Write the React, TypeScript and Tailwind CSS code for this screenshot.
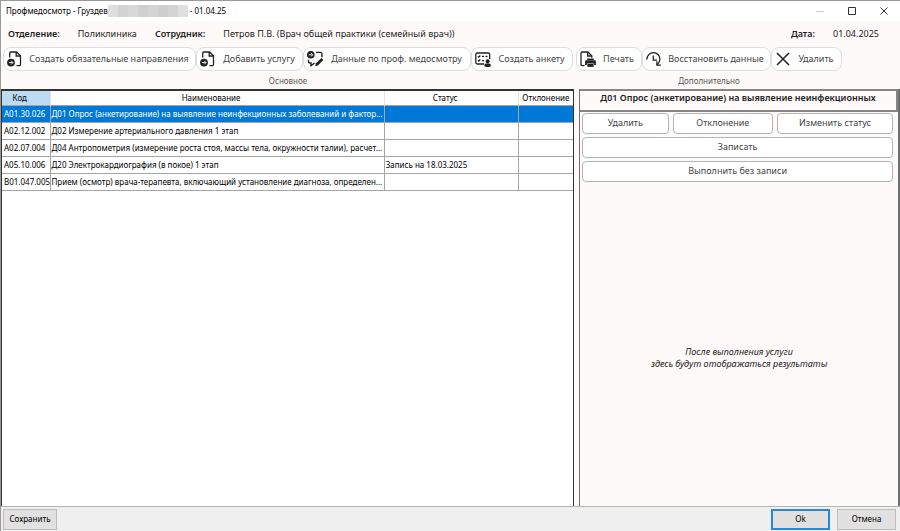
import React from "react";

const services = [
  {
    code: "A01.30.026",
    name: "Д01 Опрос (анкетирование) на выявление неинфекционных заболеваний и фактор...",
    status: "",
  },
  { code: "A02.12.002", name: "Д02 Измерение артериального давления 1 этап", status: "" },
  {
    code: "A02.07.004",
    name: "Д04 Антропометрия (измерение роста стоя, массы тела, окружности талии), расчет...",
    status: "",
  },
  {
    code: "A05.10.006",
    name: "Д20 Электрокардиография (в покое) 1 этап",
    status: "Запись на 18.03.2025",
  },
  {
    code: "B01.047.005",
    name: "Прием (осмотр) врача-терапевта, включающий установление диагноза, определен...",
    status: "",
  },
];

function AddFileIcon() {
  return (
    <svg className="h-4 w-4 shrink-0" viewBox="0 0 16 16" fill="none" stroke="#222" strokeWidth="1.3">
      <path d="M2.700 6.500V2.200C2.700 1.400 3.100 1 3.900 1H9.500l4 3.800v8.700c0 .8-.4 1.200-1.200 1.200H9.500" />
      <path d="M9.200 1v4h4.300" />
      <circle cx="4" cy="11.600" r="3.900" fill="#222" stroke="none" />
      <path d="M2 11.600h3.800M4.300 9.900L6 11.600l-1.700 1.700" stroke="#fff" strokeWidth="0.9" />
    </svg>
  );
}

function ExamDataIcon() {
  return (
    <svg className="h-4 w-4 shrink-0" viewBox="0 0 16 16" fill="none" stroke="#222" strokeWidth="1.4">
      <circle cx="3.800" cy="3.800" r="3.800" fill="#222" stroke="none" />
      <path d="M1.800 3.800h3.800M4.100 2.100l1.700 1.700-1.700 1.700" stroke="#fff" strokeWidth="0.9" />
      <path d="M9 1.400h4.400c1 0 1.500.5 1.500 1.500v3.400" />
      <path d="M1.500 8.800v1.700c0 1 .5 1.500 1.500 1.500h1v2.700L7.500 12" />
      <path d="M8.300 15.300l.6-3 5.600-5.200L16.300 9l-5.400 5.400z" fill="#222" stroke="none" />
    </svg>
  );
}

function SurveyIcon() {
  return (
    <svg className="h-4 w-4 shrink-0" viewBox="0 0 16 16" fill="none" stroke="#222" strokeWidth="1.3">
      <path d="M9 13H2.300C1.300 13 .8 12.500.8 11.500v-8C.8 2.500 1.300 2 2.300 2h10.900c1 0 1.500.5 1.500 1.500V8" />
      <path d="M3 5.200l.8.800 1.500-1.400M7 5.400h2M10.500 5.400h2" />
      <path d="M3 9.200l.8.800 1.500-1.400M7 9.600h2" />
      <circle cx="12.600" cy="10.200" r="2" fill="#222" stroke="none" />
      <path d="M9.300 14.400c0-1.400 1.300-2.200 3.300-2.200s3.300.8 3.300 2.200-1.300 1.500-3.300 1.500-3.300-.1-3.300-1.500z" fill="#222" stroke="none" />
    </svg>
  );
}

function PrintIcon() {
  return (
    <svg className="h-4 w-4 shrink-0" viewBox="0 0 16 16" fill="none" stroke="#222" strokeWidth="1.3">
      <path d="M4.500 14.600H2.200c-.8 0-1.200-.4-1.200-1.200V2.200C1 1.400 1.400 1 2.200 1h5.600l4 3.800v2" />
      <path d="M7.700 1v4h4.100" />
      <path d="M7.200 7.500h6.600v1.600H7.200z" fill="#222" stroke="none" />
      <path d="M6.600 9.300h7.800c.9 0 1.500.5 1.500 1.400v3.400h-1.800v-1.500H6.900v1.500H5.100v-3.400c0-.9.600-1.400 1.500-1.400z" fill="#222" stroke="none" />
      <path d="M7.400 13h6.200v2.900H7.400z" fill="#222" stroke="none" />
    </svg>
  );
}

function RestoreIcon() {
  return (
    <svg className="h-4 w-4 shrink-0" viewBox="0 0 16 16" fill="none" stroke="#222" strokeWidth="1.3">
      <path d="M.9 8.500C.9 4.500 3.700 1.700 7.300 1.700s6.600 2.800 6.600 6.300c0 2.500-1.200 4.500-2.800 6" />
      <path d="M7.300 4.600v4.500h3.600" />
      <path d="M10.900 10.300V14.200h4" />
    </svg>
  );
}

function CrossIcon() {
  return (
    <svg className="h-4 w-4 shrink-0" viewBox="0 0 16 16" fill="none" stroke="#222" strokeWidth="1.5">
      <path d="M2 2l12 12M14 2L2 14" />
    </svg>
  );
}

function ToolButton({ icon, label, className }: { icon: React.ReactNode; label: string; className: string }) {
  return (
    <button
      type="button"
      className={`flex h-6 items-center rounded-lg border border-[#dedede] bg-white pl-[3px] text-[9px] text-[#444] ${className}`}
    >
      {icon}
      <span className="flex-1 whitespace-nowrap text-center">{label}</span>
    </button>
  );
}

function TitleBar() {
  return (
    <header className="flex h-[21px] items-center border-t border-[#999] bg-white pl-[5px] text-[8px] text-black">
      <h1>Профмедосмотр - Груздев</h1>
      <div className="grid h-3 w-20 grid-cols-8">
        <span className="bg-[#dedede]" />
        <span className="bg-[#d3d3d3]" />
        <span className="bg-[#d8d8d8]" />
        <span className="bg-[#d0d0d0]" />
        <span className="bg-[#d5d5d5]" />
        <span className="bg-[#cfcfcf]" />
        <span className="bg-[#d4d4d4]" />
        <span className="bg-[#e0e0e0]" />
      </div>
      <span className="ml-[2px]">- 01.04.25</span>
      <div className="ml-auto flex">
        <button type="button" aria-label="Свернуть" className="flex w-8 justify-center">
          <svg className="h-2 w-2" viewBox="0 0 8 8" stroke="#ccc">
            <path d="M0 4.500h8" />
          </svg>
        </button>
        <button type="button" aria-label="Развернуть" className="flex w-8 justify-center">
          <svg className="h-2 w-2" viewBox="0 0 8 8" fill="none" stroke="#333">
            <path d="M.5.5h7v7h-7z" />
          </svg>
        </button>
        <button type="button" aria-label="Закрыть" className="flex w-8 justify-center">
          <svg className="h-2 w-2" viewBox="0 0 8 8" stroke="#333">
            <path d="M.5.5l7 7M7.500.5l-7 7" />
          </svg>
        </button>
      </div>
    </header>
  );
}

function Toolbar() {
  return (
    <div className="flex gap-[3px] pl-[2px] text-center text-[8px] text-[#555]">
      <div>
        <div className="flex">
          <ToolButton icon={<AddFileIcon />} label="Создать обязательные направления" className="w-[193px]" />
          <ToolButton icon={<AddFileIcon />} label="Добавить услугу" className="w-[107px]" />
          <ToolButton icon={<ExamDataIcon />} label="Данные по проф. медосмотру" className="w-[168px]" />
          <ToolButton icon={<SurveyIcon />} label="Создать анкету" className="w-[102px]" />
        </div>
        <p className="h-[18px] leading-[20px]">Основное</p>
      </div>
      <div>
        <div className="flex">
          <ToolButton icon={<PrintIcon />} label="Печать" className="w-[66px]" />
          <ToolButton icon={<RestoreIcon />} label="Восстановить данные" className="w-[129px]" />
          <ToolButton icon={<CrossIcon />} label="Удалить" className="w-[71px]" />
        </div>
        <p className="h-[18px] leading-[20px]">Дополнительно</p>
      </div>
    </div>
  );
}

function ServicesTable() {
  return (
    <section className="flex-[575] border border-t-2 border-b-0 border-[#333] bg-white">
      <table className="w-full table-fixed border-collapse text-[8px] text-black">
        <colgroup>
          <col className="w-[48px]" />
          <col />
          <col className="w-[134px]" />
          <col className="w-[55px]" />
        </colgroup>
        <thead>
          <tr className="h-[14px] leading-[14px]">
            <th className="border-r border-[#e5e5e5] bg-[#bcdcf4] pr-3 font-normal">Код</th>
            <th className="border-r border-[#e5e5e5] pr-3 font-normal">Наименование</th>
            <th className="border-r border-[#e5e5e5] pr-3 font-normal">Статус</th>
            <th className="font-normal">Отклонение</th>
          </tr>
        </thead>
        <tbody>
          {services.map((service, index) => (
            <tr key={service.code} className={index === 0 ? "h-[17px] bg-[#0078d7] text-white" : "h-[17px]"}>
              <td className="border border-l-0 border-[#a5a5a5] pl-[2px] leading-4 whitespace-nowrap">{service.code}</td>
              <td className="border border-[#a5a5a5] pl-[1px] leading-4 whitespace-nowrap">{service.name}</td>
              <td className="border border-[#a5a5a5] pl-[1px] leading-4">{service.status}</td>
              <td className="border border-r-0 border-[#a5a5a5]"></td>
            </tr>
          ))}
        </tbody>
      </table>
    </section>
  );
}

function ActionButton({ label, className = "" }: { label: string; className?: string }) {
  return (
    <button
      type="button"
      className={`h-[21px] rounded-[4px] border border-[#b5b5b5] bg-white pb-[2px] text-[9px] text-[#444] ${className}`}
    >
      {label}
    </button>
  );
}

function DetailsPanel() {
  return (
    <section className="ml-[5px] flex flex-[320] flex-col border-r-2 border-l border-[#707070]">
      <h2 className="h-[23px] border-2 border-l-0 border-[#858585] text-center text-[9px] leading-[13px] font-semibold text-[#222]">
        Д01 Опрос (анкетирование) на выявление неинфекционных
      </h2>
      <div className="mt-[1px] flex flex-col gap-[3px] pr-[5px] pl-[2px]">
        <div className="flex gap-1">
          <ActionButton label="Удалить" className="flex-[86]" />
          <ActionButton label="Отклонение" className="flex-[100]" />
          <ActionButton label="Изменить статус" className="flex-[116]" />
        </div>
        <ActionButton label="Записать" />
        <ActionButton label="Выполнить без записи" />
      </div>
      <p className="flex flex-1 items-center justify-center pt-7 text-center text-[9px] leading-3 text-[#222] italic">
        После выполнения услуги
        <br />
        здесь будут отображаться результаты
      </p>
    </section>
  );
}

function App() {
  return (
    <div className="flex min-h-screen flex-col border-l border-[#999] bg-[#fffafa] font-['Noto_Sans',sans-serif]">
      <TitleBar />
      <dl className="flex h-[26px] items-center pr-[21px] pl-[7px] text-[9px] text-[#222]">
        <dt className="font-semibold">Отделение:</dt>
        <dd className="ml-[18px]">Поликлиника</dd>
        <dt className="ml-[18px] font-semibold">Сотрудник:</dt>
        <dd className="ml-[18px]">Петров П.В. (Врач общей практики (семейный врач))</dd>
        <dt className="ml-auto font-semibold">Дата:</dt>
        <dd className="ml-[18px]">01.04.2025</dd>
      </dl>
      <Toolbar />
      <main className="flex flex-1">
        <ServicesTable />
        <DetailsPanel />
      </main>
      <footer className="flex h-[25px] items-center gap-[7px] border-t border-[#b5b5b5] bg-[#efefef] pr-1 pl-[2px] text-[8px] text-black">
        <button type="button" className="mr-auto h-[21px] w-[54px] border border-[#bcbcbc] bg-[#e1e1e1]">
          Сохранить
        </button>
        <button type="button" className="h-[21px] w-[59px] border-2 border-[#2787d9] bg-[#e1e1e1]">
          Ok
        </button>
        <button type="button" className="h-[21px] w-[59px] border border-[#bcbcbc] bg-[#e1e1e1]">
          Отмена
        </button>
      </footer>
    </div>
  );
}

export default App;
